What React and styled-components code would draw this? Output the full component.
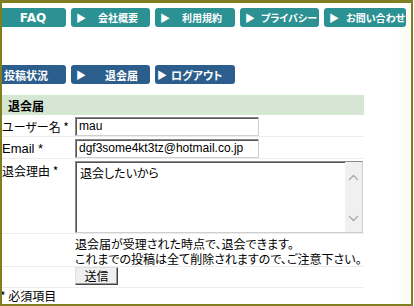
import React from 'react'
import styled, { createGlobalStyle } from 'styled-components'

const GlobalStyle = createGlobalStyle`
  body {
    margin: 0;
    background: #fff;
    font-family: "Liberation Sans", "Noto Sans CJK JP", sans-serif;
  }
`

export const Frame = styled.div`
  box-sizing: border-box;
  width: 413px;
  height: 306px;
  border-top: 3px solid #7f7f1f;
  border-left: 2px solid #7f7f1f;
  border-right: 2px solid #7f7f1f;
  border-bottom: 2px solid #7f7f1f;
  overflow: hidden;
  background: linear-gradient(to right, #fff 0, #fff 390px, #fbfbf3 100%);
`

export const NavRow = styled.div`
  display: flex;
  gap: 5px;
  margin-left: -2px;
  margin-top: ${(p) => p.$top}px;
`

export const NavButton = styled.div`
  box-sizing: border-box;
  flex: none;
  width: ${(p) => p.$w}px;
  height: 19px;
  border-radius: 3px;
  background: ${(p) => (p.$blue ? '#2b5e8c' : '#2c9192')};
  color: #fff;
  font-family: "Noto Sans CJK JP", sans-serif;
  font-weight: bold;
  font-size: ${(p) => (p.$blue ? 11 : 10)}px;
  display: flex;
  align-items: center;
  justify-content: ${(p) => (p.$center ? 'center' : 'flex-start')};
  padding-left: ${(p) => p.$pad || 0}px;
  white-space: nowrap;
  overflow: hidden;
  font-feature-settings: "palt";
`

export const FaqText = styled.span`
  font-family: "DejaVu Sans", sans-serif;
  font-size: 12px;
`

export const Arrow = styled.span`
  font-size: 10px;
  margin-right: ${(p) => p.$gap}px;
`

export const FormTable = styled.div`
  margin-top: 11px;
  margin-left: -2px;
  width: 364px;
  font-family: "Noto Sans CJK JP", sans-serif;
  font-size: 12px;
  font-feature-settings: "palt";
  color: #000;
`

export const Header = styled.div`
  height: 20px;
  margin-left: 2px;
  background: #d5e7d3;
  font-weight: bold;
  font-size: 12px;
  display: flex;
  align-items: center;
  padding-left: 6px;
`

export const Row = styled.div`
  display: grid;
  grid-template-columns: 74px 1fr;
  border-bottom: 1px solid #ececec;
  padding: ${(p) => p.$pad || '2px 0 0'};
  align-items: start;
`

export const Label = styled.div`
  padding-left: 2px;
  line-height: 19px;
  white-space: nowrap;
  font-family: ${(p) => (p.$latin ? '"Liberation Sans", "Noto Sans CJK JP", sans-serif' : 'inherit')};
  font-size: ${(p) => (p.$latin ? '13px' : '12px')};
`

export const TextInput = styled.div`
  box-sizing: border-box;
  width: 184px;
  height: 19px;
  margin-left: 1px;
  border: 1px solid #8a8a8a;
  border-right-color: #cfcfcf;
  border-bottom-color: #cfcfcf;
  box-shadow: inset 1px 1px 0 #555;
  font-family: "Liberation Sans", sans-serif;
  font-size: 12px;
  line-height: 17px;
  padding-left: 3px;
  background: #fff;
  white-space: nowrap;
  overflow: hidden;
`

export const TextArea = styled.div`
  box-sizing: border-box;
  width: 288px;
  height: 72px;
  margin-left: 1px;
  border: 1px solid #8a8a8a;
  border-right-color: #cfcfcf;
  border-bottom-color: #cfcfcf;
  box-shadow: inset 1px 1px 0 #555;
  display: flex;
  background: #fff;
`

export const AreaText = styled.div`
  flex: 1;
  padding: 2px 4px;
  font-size: 12px;
`

export const ScrollBar = styled.div`
  width: 17px;
  background: #f0f0f0;
  display: flex;
  flex-direction: column;
  justify-content: space-between;
  align-items: center;
  padding: 12px 0 10px;
`

export const Note = styled.div`
  grid-column: 2;
  line-height: 15px;
  height: 30px;
  white-space: nowrap;
  padding-left: 1px;
`

export const SubmitButton = styled.div`
  grid-column: 2;
  box-sizing: border-box;
  width: 43px;
  height: 18px;
  margin-left: 1px;
  border: 1px solid #e0e0e0;
  border-right-color: #444;
  border-bottom-color: #444;
  box-shadow: inset -1px -1px 0 #999;
  background: #efefef;
  display: flex;
  align-items: center;
  justify-content: center;
  font-size: 12px;
  line-height: 16px;
`

export const Footnote = styled.div`
  margin-left: -2px;
  font-family: "Noto Sans CJK JP", sans-serif;
  font-size: 12px;
  line-height: 15px;
`

const Chevron = ({ up }) => (
  <svg width="11" height="7" viewBox="0 0 11 7">
    <path
      d={up ? 'M1 6 L5.5 1.5 L10 6' : 'M1 1 L5.5 5.5 L10 1'}
      fill="none"
      stroke="#a8a8a8"
      strokeWidth="1.3"
    />
  </svg>
)

export default function App() {
  return (
    <>
      <GlobalStyle />
      <Frame>
        <NavRow $top={5}>
          <NavButton $w={66} $center>
            <FaqText>FAQ</FaqText>
          </NavButton>
          <NavButton $w={79} $pad={5}>
            <Arrow $gap={12}>▶</Arrow>会社概要
          </NavButton>
          <NavButton $w={80} $pad={5}>
            <Arrow $gap={12}>▶</Arrow>利用規約
          </NavButton>
          <NavButton $w={79} $pad={5}>
            <Arrow $gap={6}>▶</Arrow>プライバシー
          </NavButton>
          <NavButton $w={82} $pad={5}>
            <Arrow $gap={7}>▶</Arrow>お問い合わせ
          </NavButton>
        </NavRow>
        <NavRow $top={38}>
          <NavButton $w={66} $blue $pad={4}>
            投稿状況
          </NavButton>
          <NavButton $w={79} $blue $pad={5}>
            <Arrow $gap={19}>▶</Arrow>退会届
          </NavButton>
          <NavButton $w={80} $blue $pad={2}>
            <Arrow $gap={4}>▶</Arrow>ログアウト
          </NavButton>
        </NavRow>
        <FormTable>
          <Header>退会届</Header>
          <Row>
            <Label>ユーザー名 *</Label>
            <TextInput>mau</TextInput>
          </Row>
          <Row>
            <Label $latin>Email *</Label>
            <TextInput>dgf3some4kt3tz@hotmail.co.jp</TextInput>
          </Row>
          <Row>
            <Label>退会理由 *</Label>
            <TextArea>
              <AreaText>退会したいから</AreaText>
              <ScrollBar>
                <Chevron up />
                <Chevron />
              </ScrollBar>
            </TextArea>
          </Row>
          <Row $pad="2px 0 0">
            <Note>
              退会届が受理された時点で、退会できます。
              <br />
              これまでの投稿は全て削除されますので、ご注意下さい。
            </Note>
          </Row>
          <Row $pad="0 0 2px">
            <SubmitButton>送信</SubmitButton>
          </Row>
        </FormTable>
        <Footnote>* 必須項目</Footnote>
      </Frame>
    </>
  )
}
